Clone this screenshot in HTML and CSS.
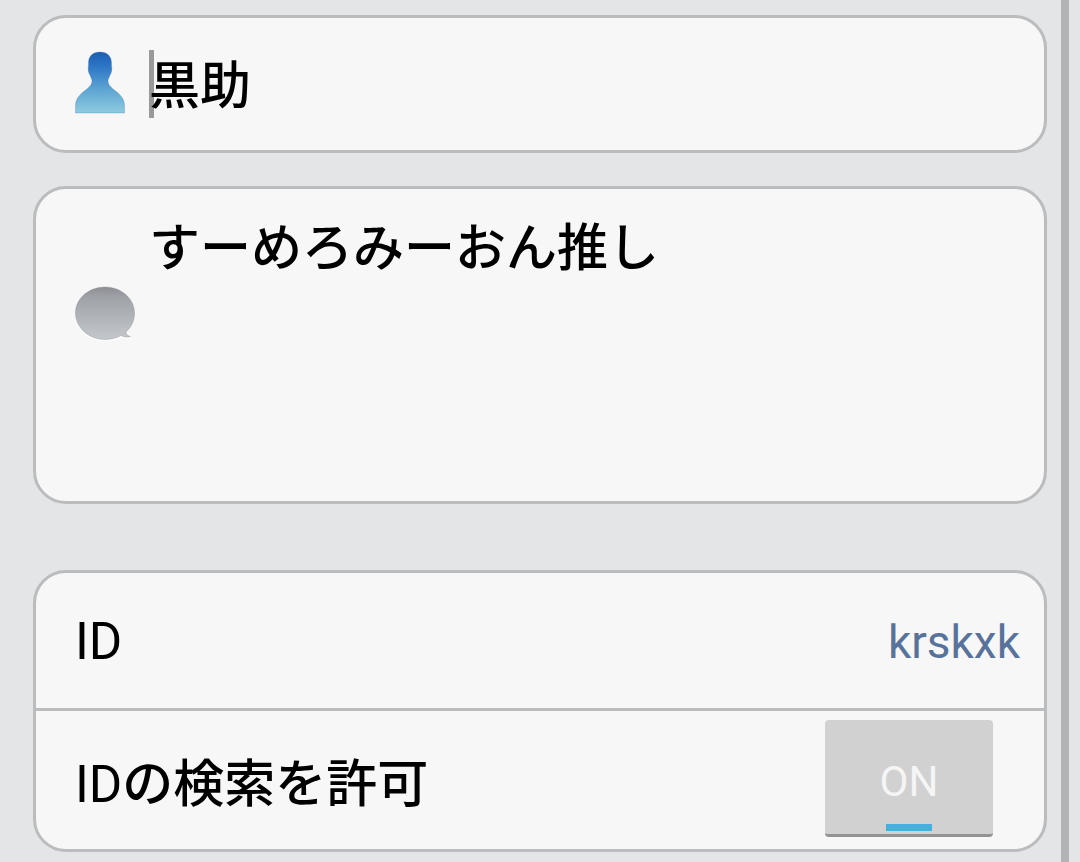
FILE: index.html
```html
<!DOCTYPE html>
<html lang="ja">
<head>
  <meta charset="UTF-8" />
  <meta name="viewport" content="width=device-width, initial-scale=1" />
  <title>プロフィール</title>
  <link rel="stylesheet" href="styles.css">
</head>
<body>

  <main class="panel">
    <section class="card name-card">
      <label for="name" class="icon" aria-label="名前">
        <svg width="50" height="64" viewBox="0 0 50 64">
          <defs>
            <linearGradient id="personFill" x1="0" y1="0" x2="0" y2="1">
              <stop offset="0" stop-color="#1c5db3" />
              <stop offset="0.25" stop-color="#2f78c6" />
              <stop offset="0.6" stop-color="#5ba3d2" />
              <stop offset="1" stop-color="#8ecbe0" />
            </linearGradient>
          </defs>
          <path fill="url(#personFill)" stroke="#2c659f" stroke-opacity="0.25" d="M25 1C17.500 1 13.500 5.500 13.500 12c0 2 .1 3-.3 5-.3 4 1.300 6 2.200 8 .6 2 1.600 3.500 1.600 5 0 3-2 5.500-5 8C7 42 .5 46 .5 55v7h49v-7c0-9-6.500-13-11.500-17-3-2.500-5-5-5-8 0-1.500 1-3 1.600-5 .9-2 2.500-4 2.200-8-.4-2-.3-3-.3-5C36.500 5.500 32.500 1 25 1z" />
        </svg>
      </label>
      <div class="name-field">
        <input type="text" id="name" value="黒助" autocomplete="off" />
      </div>
    </section>

    <section class="card message-card">
      <label for="message" class="icon" aria-label="ひとこと">
        <svg width="62" height="58" viewBox="0 0 62 58">
          <defs>
            <linearGradient id="bubbleFill" x1="0" y1="0" x2="0" y2="1">
              <stop offset="0" stop-color="#8c8e93" />
              <stop offset="0.2" stop-color="#9fa2a8" />
              <stop offset="1" stop-color="#c4c7cb" />
            </linearGradient>
          </defs>
          <path fill="#ffffff" d="M30 2.500C13.500 2.500.5 14 .5 28.500S13.500 55 30 55c7 0 13-1.500 18-3.500 3 1.500 6 1.500 8.500.5z" />
          <path fill="url(#bubbleFill)" stroke="#77797e" stroke-opacity="0.3" d="M30 1C13.700 1 .5 12.500 .5 27S13.700 53.500 30 53.500c6 0 11.500-1.500 16-4 3.500 1.800 6.500 2 9.500 1-2.500-.8-4-2-4.500-4.500 5.500-5 8.500-11.500 8.500-19C59.500 12.500 46.300 1 30 1z" />
        </svg>
      </label>
      <textarea id="message">すーめろみーおん推し</textarea>
    </section>

    <section class="card id-card">
      <div class="row">
        <span>ID</span>
        <span class="user-id">krskxk</span>
      </div>
      <div class="row switch-row">
        <span id="searchLabel">ID<span class="ja">の検索を許可</span></span>
        <button type="button" class="toggle" aria-pressed="true" aria-describedby="searchLabel">ON</button>
      </div>
    </section>
  </main>

</body>
</html>
```
FILE: styles.css
```css
* {
  box-sizing: border-box;
}
body {
  margin: 0;
  padding-right: 11px;
  background: #e4e5e7;
  color: #000;
  font-family: Roboto, "Noto Sans CJK JP", sans-serif;
  font-size: 51px;
  line-height: 60px;
}
.panel {
  display: flex;
  flex-direction: column;
  min-height: 100vh;
  padding: 15px 14px 10px 33px;
  border-right: 8px solid #b1b3b6;
}
.card {
  background: #f7f7f7;
  border: 3px solid #bbbcbd;
  border-radius: 33px;
}
.icon {
  flex: none;
  width: 74px;
}
.icon svg {
  display: block;
}
input, textarea {
  display: block;
  flex: 1;
  width: 100%;
  min-width: 0;
  margin: 0;
  padding: 0;
  border: none;
  outline: none;
  background: transparent;
  color: inherit;
  font: inherit;
  font-weight: 500;
  resize: none;
}
.ja {
  font-weight: 500;
}

/* name */
.name-card {
  display: flex;
  align-items: center;
  min-height: 138px;
  padding: 0 24px 0 39px;
}
.name-card .icon {
  padding-bottom: 2px;
}
.name-field {
  position: relative;
  flex: 1;
}
.name-field::before {
  content: "";
  position: absolute;
  top: 0;
  left: 0;
  width: 5px;
  height: 68px;
  background: #999;
}
.name-field input {
  position: relative;
  height: 68px;
  padding-bottom: 4px;
}

/* status message */
.message-card {
  display: flex;
  min-height: 318px;
  margin-top: 33px;
  padding: 30px 24px 30px 39px;
}
.message-card .icon {
  padding-top: 67px;
}

/* id settings */
.id-card {
  margin-top: 66px;
}
.row {
  display: flex;
  align-items: center;
  justify-content: space-between;
  min-height: 135px;
  padding: 3px 24px 0 39px;
}
.switch-row {
  min-height: 141px;
  padding: 9px 51px 0 39px;
  border-top: 3px solid #bbbcbd;
}
.user-id {
  color: #58739b;
  font-size: 46px;
}
.toggle {
  display: flex;
  flex-direction: column;
  align-items: center;
  align-self: flex-start;
  justify-content: flex-end;
  gap: 18px;
  width: 168px;
  height: 117px;
  padding: 0 0 3px;
  border: none;
  border-bottom: 3px solid #939393;
  border-radius: 4px;
  background: #d1d1d1;
  color: #f5f5f5;
  font-family: inherit;
  font-size: 42px;
  line-height: 48px;
  cursor: pointer;
}
.toggle::after {
  content: "";
  width: 46px;
  height: 7px;
  background: #43b1dc;
}
```
